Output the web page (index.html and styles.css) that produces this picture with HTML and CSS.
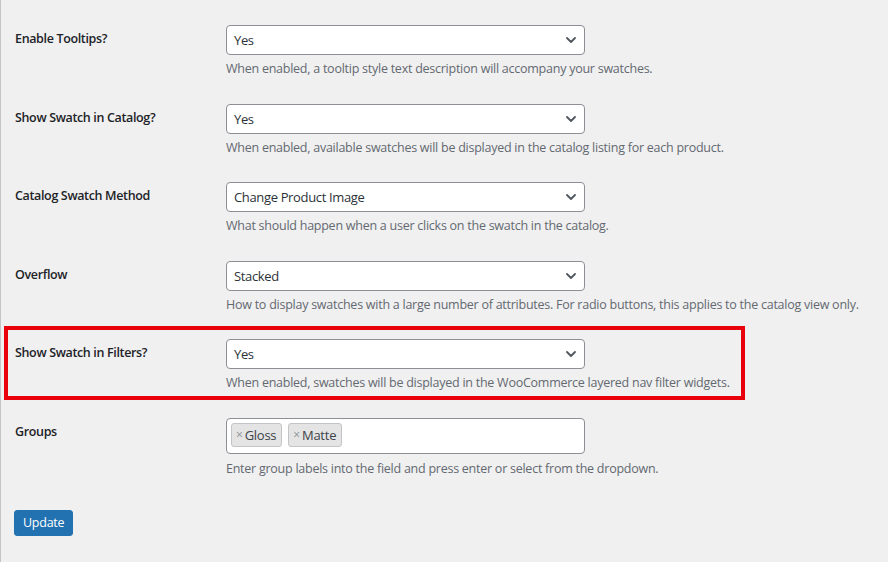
FILE: index.html
```html
<!DOCTYPE html>
<html lang="en">
<head>
<meta charset="utf-8">
<title>Swatch settings</title>
<link rel="stylesheet" href="styles.css">
</head>
<body>
<div class="wrap">
  <form class="settings">
    <div class="row">
      <div class="label">Enable Tooltips?</div>
      <div class="field">
        <div class="select"><span>Yes</span><svg class="chev" width="10" height="6" viewBox="0 0 10 6"><polyline points="1,1 5,5 9,1" fill="none" stroke="#50575e" stroke-width="1.8" stroke-linecap="round" stroke-linejoin="round"/></svg></div>
        <p class="desc">When enabled, a tooltip style text description will accompany your swatches.</p>
      </div>
    </div>
    <div class="row">
      <div class="label">Show Swatch in Catalog?</div>
      <div class="field">
        <div class="select"><span>Yes</span><svg class="chev" width="10" height="6" viewBox="0 0 10 6"><polyline points="1,1 5,5 9,1" fill="none" stroke="#50575e" stroke-width="1.8" stroke-linecap="round" stroke-linejoin="round"/></svg></div>
        <p class="desc">When enabled, available swatches will be displayed in the catalog listing for each product.</p>
      </div>
    </div>
    <div class="row">
      <div class="label">Catalog Swatch Method</div>
      <div class="field">
        <div class="select"><span>Change Product Image</span><svg class="chev" width="10" height="6" viewBox="0 0 10 6"><polyline points="1,1 5,5 9,1" fill="none" stroke="#50575e" stroke-width="1.8" stroke-linecap="round" stroke-linejoin="round"/></svg></div>
        <p class="desc">What should happen when a user clicks on the swatch in the catalog.</p>
      </div>
    </div>
    <div class="row">
      <div class="label">Overflow</div>
      <div class="field">
        <div class="select"><span>Stacked</span><svg class="chev" width="10" height="6" viewBox="0 0 10 6"><polyline points="1,1 5,5 9,1" fill="none" stroke="#50575e" stroke-width="1.8" stroke-linecap="round" stroke-linejoin="round"/></svg></div>
        <p class="desc">How to display swatches with a large number of attributes. For radio buttons, this applies to the catalog view only.</p>
      </div>
    </div>
    <div class="row highlight">
      <div class="label">Show Swatch in Filters?</div>
      <div class="field">
        <div class="select"><span>Yes</span><svg class="chev" width="10" height="6" viewBox="0 0 10 6"><polyline points="1,1 5,5 9,1" fill="none" stroke="#50575e" stroke-width="1.8" stroke-linecap="round" stroke-linejoin="round"/></svg></div>
        <p class="desc">When enabled, swatches will be displayed in the WooCommerce layered nav filter widgets.</p>
      </div>
    </div>
    <div class="row">
      <div class="label">Groups</div>
      <div class="field">
        <div class="tags">
          <span class="tag"><span class="x">×</span>Gloss</span>
          <span class="tag"><span class="x">×</span>Matte</span>
        </div>
        <p class="desc desc-groups">Enter group labels into the field and press enter or select from the dropdown.</p>
      </div>
    </div>
    <div class="actions">
      <button type="button" class="button-primary">Update</button>
    </div>
  </form>
</div>
</body>
</html>
```

FILE: styles.css
```css
*, *::before, *::after {
  box-sizing: border-box;
}

html, body {
  margin: 0;
  padding: 0;
  background: #f0f0f1;
}

body {
  font-family: "Segoe UI", "Open Sans", "Noto Sans", sans-serif;
  font-size: 12.5px;
  letter-spacing: -0.25px;
  color: #1d2327;
}

.wrap {
  min-height: 562px;
  border-left: 1px solid #c3c4c7;
  padding: 12px 0 0 14px;
}

.settings {
  display: flex;
  flex-direction: column;
}

.row {
  display: flex;
  padding: 13px 0 12.5px;
  position: relative;
}

.label {
  width: 211px;
  flex: none;
  padding-top: 5px;
  font-weight: 600;
  font-size: 12.5px;
  letter-spacing: -0.35px;
  line-height: 17px;
  color: #1d2327;
}

.field {
  flex: 1;
}

.select {
  width: 359px;
  height: 30px;
  background: #fff;
  border: 1px solid #8c8f94;
  border-radius: 4px;
  padding: 0 24px 0 7px;
  font-size: 13px;
  letter-spacing: -0.35px;
  line-height: 28px;
  color: #2c3338;
  display: flex;
  align-items: center;
  justify-content: space-between;
}

.chev {
  margin-right: -16px;
  flex: none;
}

.desc {
  margin: 5px 0 0;
  font-size: 12.5px;
  line-height: 18px;
  color: #646970;
}

.desc-groups {
  margin-top: 6px;
}

.tags {
  width: 359px;
  height: 36px;
  background: #fff;
  border: 1px solid #8c8f94;
  border-radius: 4px;
  padding: 4px 4px;
  display: flex;
  gap: 6px;
  align-items: flex-start;
}

.tag {
  height: 24px;
  display: inline-flex;
  align-items: center;
  padding: 0 5px 0 4px;
  background: #e4e4e4;
  border: 1px solid #c3c4c7;
  border-radius: 3px;
  font-size: 13px;
  color: #3c434a;
}

.tag .x {
  color: #8c8f94;
  font-size: 12px;
  margin-right: 2px;
}

.highlight::after {
  content: "";
  position: absolute;
  top: 0;
  left: -11px;
  width: 741px;
  height: 74px;
  border: 4px solid #e8000b;
  pointer-events: none;
}

.actions {
  padding-top: 20px;
}

.button-primary {
  margin-left: -1px;
  height: 26px;
  padding: 0 8px;
  background: #2271b1;
  border: 1px solid #2271b1;
  border-radius: 3px;
  color: #fff;
  font-family: inherit;
  font-size: 12.5px;
  letter-spacing: -0.25px;
  line-height: 24px;
}
```
